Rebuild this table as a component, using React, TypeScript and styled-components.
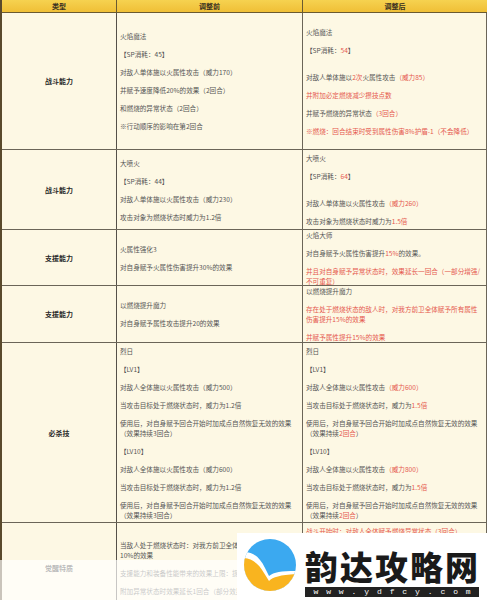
import React from 'react';
import styled, { createGlobalStyle } from 'styled-components';

type Row = {
  label: string;
  height: number;
  before: string[];
  after: string[];
};

// {...} marks the red (changed) part of a line, \n a forced wrap, '' an extra blank line
const rows: Row[] = [
  {
    label: '战斗能力',
    height: 137,
    before: [
      '火焰魔法',
      '【SP消耗：45】',
      '对敌人单体施以火属性攻击（威力170）',
      '并赋予速度降低20%的效果（2回合）',
      '和燃烧的异常状态（2回合）',
      '※行动顺序的影响在第2回合',
    ],
    after: [
      '火焰魔法',
      '【SP消耗：{54}】',
      '',
      '对敌人单体施以{2次}火属性攻击{（威力85）}',
      '{并附加必定燃烧减少攒技点数}',
      '并赋予燃烧的异常状态{（3回合）}',
      '{※燃烧：回合结束时受到属性伤害8%护盾-1（不会降低）}',
    ],
  },
  {
    label: '战斗能力',
    height: 80,
    before: ['大喷火', '【SP消耗：44】', '对敌人单体施以火属性攻击（威力230）', '攻击对象为燃烧状态时威力为1.2倍'],
    after: ['大喷火', '【SP消耗：{64}】', '', '对敌人单体施以火属性攻击{（威力260）}', '攻击对象为燃烧状态时威力为{1.5倍}'],
  },
  {
    label: '支援能力',
    height: 56,
    before: ['火属性强化3', '对自身赋予火属性伤害提升30%的效果'],
    after: [
      '火焰大师',
      '对自身赋予火属性伤害提升{15%}的效果。',
      '{并且对自身赋予异常状态时，效果延长一回合（一部分增强/不可重复）}',
    ],
  },
  {
    label: '支援能力',
    height: 57,
    before: ['以燃烧提升魔力', '对自身赋予属性攻击提升20的效果'],
    after: [
      '以燃烧提升魔力',
      '{存在处于燃烧状态的敌人时，对我方前卫全体赋予所有属性伤害提升15%的效果}',
      '{并赋予属性提升15%的效果}',
    ],
  },
  {
    label: '必杀技',
    height: 180,
    before: [
      '烈日',
      '【LV1】',
      '对敌人全体施以火属性攻击（威力500）',
      '当攻击目标处于燃烧状态时，威力为1.2倍',
      '使用后，对自身赋予回合开始时加成点自然恢复无效的效果\n（效果持续3回合）',
      '【LV10】',
      '对敌人全体施以火属性攻击（威力600）',
      '当攻击目标处于燃烧状态时，威力为1.2倍',
      '使用后，对自身赋予回合开始时加成点自然恢复无效的效果\n（效果持续3回合）',
    ],
    after: [
      '烈日',
      '【LV1】',
      '对敌人全体施以火属性攻击{（威力600）}',
      '当攻击目标处于燃烧状态时，威力为{1.5倍}',
      '使用后，对自身赋予回合开始时加成点自然恢复无效的效果\n（效果持续{2回合}）',
      '【LV10】',
      '对敌人全体施以火属性攻击{（威力800）}',
      '当攻击目标处于燃烧状态时，威力为{1.5倍}',
      '使用后，对自身赋予回合开始时加成点自然恢复无效的效果\n（效果持续{2回合}）',
    ],
  },
  {
    label: '觉醒特质',
    height: 90,
    before: [
      '当敌人处于燃烧状态时：对我方前卫全体赋予攻击力提升\n10%的效果',
      '支援能力和装备性能带来的效果上限：提升',
      '附加异常状态时效果延长1回合（部分效果除外）',
    ],
    after: [
      '{战斗开始时：对敌人全体赋予燃烧异常状态（3回合）}',
      '{当敌人处于燃烧状态时：对我方前卫全体赋予攻击力提升15%的效果}',
      '支援能力和装备性能带来的效果上限：提升',
      '附加异常状态时效果延长1回合（部分效果除外）',
      '',
    ],
  },
];

const renderSegments = (text: string) =>
  text.split(/(\{[^}]*\})/).map((part, i) =>
    part.startsWith('{') ? <Red key={i}>{part.slice(1, -1)}</Red> : <span key={i}>{part}</span>,
  );

const Lines = ({ lines }: { lines: string[] }) => (
  <>
    {lines.map((line, i) =>
      line === '' ? (
        <Blank key={i} />
      ) : (
        <Line key={i}>
          {line.split('\n').map((piece, j) => (
            <Piece key={j}>{renderSegments(piece)}</Piece>
          ))}
        </Line>
      ),
    )}
  </>
);

const Logo = () => (
  <svg width="52" height="52" viewBox="0 0 52 52">
    <defs>
      <clipPath id="round">
        <circle cx="26" cy="26" r="26" />
      </clipPath>
    </defs>
    <g clipPath="url(#round)">
      <rect width="52" height="52" fill="#3ba9f0" />
      <path d="M0 13 C10 13 16 19 21 29 L25 37 C30 33 37 32 52 32 L52 52 L0 52 Z" fill="#ffffff" />
      <path d="M0 19 C9 20 15 25 20 34 L25 42 C29 38 36 36 52 35 L52 52 L0 52 Z" fill="#f9b41f" />
    </g>
  </svg>
);

const App = () => {
  return (
    <Page>
      <GlobalStyle />
      <Table>
        <HeaderRow>
          <HeadCell>类型</HeadCell>
          <HeadCell>调整前</HeadCell>
          <HeadCell>调整后</HeadCell>
        </HeaderRow>
        {rows.map((row, i) => (
          <BodyRow key={i} $height={row.height}>
            <LabelCell>{row.label}</LabelCell>
            <TextCell>
              <Lines lines={row.before} />
            </TextCell>
            <TextCell>
              <Lines lines={row.after} />
            </TextCell>
          </BodyRow>
        ))}
      </Table>
      <Fade />
      <Watermark>
        <Logo />
        <Brand>
          <BrandName>韵达攻略网</BrandName>
          <BrandUrl>www.ydfcy.com</BrandUrl>
        </Brand>
      </Watermark>
    </Page>
  );
};

export default App;

const GlobalStyle = createGlobalStyle`
  html, body {
    margin: 0;
    padding: 0;
    background: #ffffff;
  }
  * {
    box-sizing: border-box;
  }
`;

const Page = styled.div`
  position: relative;
  width: 487px;
  height: 600px;
  overflow: hidden;
  font-family: 'Noto Sans CJK SC', 'Noto Sans', sans-serif;
  background: #fdf8e4;
`;

const Table = styled.div`
  display: flex;
  flex-direction: column;
  border-left: 2px solid #5a4a2c;
`;

const HeaderRow = styled.div`
  display: grid;
  grid-template-columns: 115px 186px 184px;
  height: 13px;
  background: linear-gradient(#f6d250, #f0bf36);
  border-bottom: 1px solid #6a5a30;
`;

const HeadCell = styled.div`
  display: flex;
  align-items: center;
  justify-content: center;
  font-size: 7px;
  font-weight: 700;
  color: #3a3020;
  border-right: 1px solid #6a5a30;

  &:last-child {
    border-right: none;
  }
`;

const BodyRow = styled.div<{ $height: number }>`
  display: grid;
  grid-template-columns: 115px 186px 184px;
  height: ${({ $height }) => $height}px;
  border-bottom: 1px solid #6b6558;
  overflow: hidden;
`;

const LabelCell = styled.div`
  display: flex;
  align-items: center;
  justify-content: center;
  font-size: 7px;
  font-weight: 700;
  color: #2a2a2a;
  border-right: 1px solid #555049;
`;

const TextCell = styled.div`
  display: flex;
  flex-direction: column;
  justify-content: center;
  gap: 8px;
  padding: 0 3px;
  overflow: hidden;
  border-right: 1px solid #6b6558;
`;

const Line = styled.div`
  font-size: 6.6px;
  line-height: 10px;
  color: #555555;
`;

const Piece = styled.div``;

const Blank = styled.div`
  height: 1px;
`;

const Red = styled.span`
  color: #e5584e;
`;

const Fade = styled.div`
  position: absolute;
  left: 0;
  right: 0;
  top: 560px;
  bottom: 0;
  background: rgba(255, 255, 255, 0.68);
`;

const Watermark = styled.div`
  position: absolute;
  left: 237px;
  top: 533px;
  right: 0;
  bottom: 0;
  display: flex;
  gap: 9px;
  padding: 6px 0 0 7px;
  background: #ffffff;
`;

const Brand = styled.div`
  display: flex;
  flex-direction: column;
  gap: 3px;
  padding-top: 9px;
`;

const BrandName = styled.div`
  font-size: 33px;
  line-height: 36px;
  font-weight: 900;
  letter-spacing: 2px;
  color: #1a1a1a;
`;

const BrandUrl = styled.div`
  width: 174px;
  height: 10px;
  background: #222222;
  color: #ffffff;
  font-family: 'Liberation Mono', monospace;
  font-size: 8px;
  line-height: 10px;
  letter-spacing: 7.9px;
  text-align: center;
  padding-left: 8px;
`;
